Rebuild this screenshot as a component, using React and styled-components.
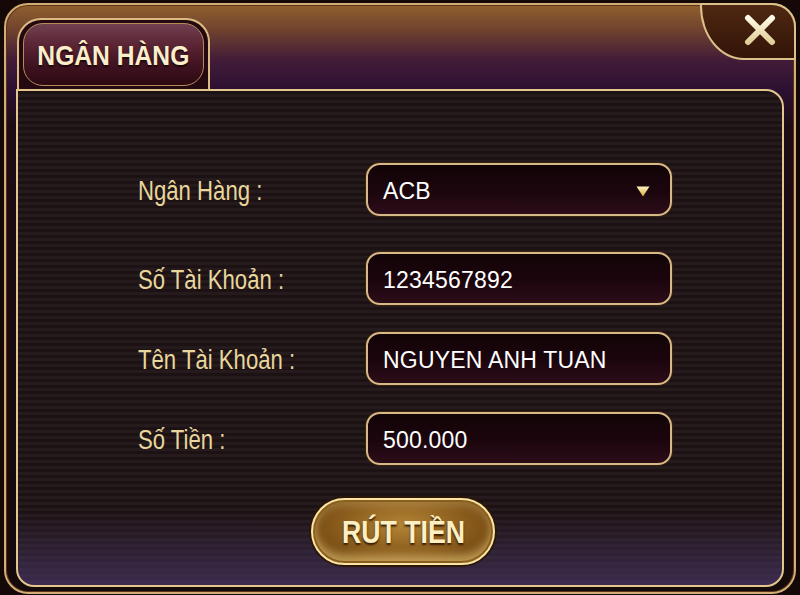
import styled, { createGlobalStyle } from "styled-components";

const GlobalStyle = createGlobalStyle`
  html, body {
    margin: 0;
    padding: 0;
    background: #150908;
  }
  body {
    width: 800px;
    height: 595px;
    overflow: hidden;
    font-family: "Liberation Sans", Arial, sans-serif;
  }
`;

const fields = [
  { label: "Ngân Hàng :", value: "ACB", select: true },
  { label: "Số Tài Khoản :", value: "1234567892" },
  { label: "Tên Tài Khoản :", value: "NGUYEN ANH TUAN" },
  { label: "Số Tiền :", value: "500.000" },
];

const App = () => {
  return (
    <>
      <GlobalStyle />
      <Frame>
        <Header>
          <Tab>
            <TabPill>
              <Condensed $scale={0.88}>NGÂN HÀNG</Condensed>
            </TabPill>
          </Tab>
        </Header>
        <Panel>
          <Form>
            {fields.map((f, i) => (
              <Row key={f.label} $first={i === 0}>
                <Label>
                  <Condensed $scale={0.82} $origin="left">
                    {f.label}
                  </Condensed>
                </Label>
                <Input>
                  <Value>{f.value}</Value>
                  {f.select && (
                    <svg width="14" height="11" viewBox="0 0 14 11">
                      <defs>
                        <linearGradient id="tri" x1="0" y1="0" x2="0" y2="1">
                          <stop offset="0" stopColor="#fff4c0" />
                          <stop offset="1" stopColor="#d9a63a" />
                        </linearGradient>
                      </defs>
                      <path d="M0.5 0.5 H13.5 L7 10.5 Z" fill="url(#tri)" />
                    </svg>
                  )}
                </Input>
              </Row>
            ))}
          </Form>
          <Actions>
            <SubmitButton>
              <Condensed $scale={0.86}>RÚT TIỀN</Condensed>
            </SubmitButton>
          </Actions>
        </Panel>
        <CloseButton aria-label="close">
          <svg width="34" height="34" viewBox="0 0 34 34">
            <defs>
              <linearGradient id="xg" x1="0" y1="0" x2="0" y2="1">
                <stop offset="0" stopColor="#fffbe8" />
                <stop offset="1" stopColor="#e2cf98" />
              </linearGradient>
            </defs>
            <path
              d="M5 5 L29 29 M29 5 L5 29"
              stroke="url(#xg)"
              strokeWidth="6"
              strokeLinecap="round"
            />
          </svg>
        </CloseButton>
      </Frame>
    </>
  );
};

export default App;

// the game UI uses a condensed face; no narrow font is installed, so squeeze a regular one
const Condensed = styled.span`
  display: inline-block;
  white-space: nowrap;
  transform: scaleX(${(p) => p.$scale});
  transform-origin: ${(p) => p.$origin || "center"};
`;

const Frame = styled.div`
  position: relative;
  box-sizing: border-box;
  width: 792px;
  height: 591px;
  margin: 3px 0 0 4px;
  border: 2px solid #d2ae76;
  border-radius: 24px;
  padding: 0 10px 5px 10px;
  display: flex;
  flex-direction: column;
  background: linear-gradient(
    180deg,
    #90602e 0px,
    #74462e 22px,
    #421c38 55px,
    #2c1032 85px,
    #1c0c16 120px,
    #150a0a 100%
  );
  box-shadow: inset 0 0 0 1px #5a3418;
`;

const Header = styled.div`
  height: 84px;
  padding-top: 13px;
  box-sizing: border-box;
  display: flex;
  align-items: flex-end;
`;

const Tab = styled.div`
  box-sizing: border-box;
  width: 193px;
  height: 71px;
  margin-left: 1px;
  padding: 3px 4px 3px 4px;
  border: 2px solid #dcbb82;
  border-bottom: none;
  border-radius: 24px 24px 0 0;
  background: #240a10;
`;

const TabPill = styled.div`
  box-sizing: border-box;
  height: 100%;
  border-radius: 20px;
  border: 1.5px solid #b48c5c;
  background: linear-gradient(
    180deg,
    #704050 0%,
    #5a2434 35%,
    #3e1220 70%,
    #2c0a12 100%
  );
  display: flex;
  align-items: center;
  justify-content: center;
  font-weight: 700;
  font-size: 28px;
  color: #fbeecb;
  text-shadow: 0 2px 2px #1c0508;
  padding-top: 2px;
`;

const Panel = styled.div`
  position: relative;
  flex: 1;
  box-sizing: border-box;
  border: 2px solid #e2c68e;
  border-radius: 0 18px 18px 18px;
  background:
    linear-gradient(180deg, rgba(0, 0, 0, 0) 85%, rgba(70, 52, 96, 0.75) 100%),
    repeating-linear-gradient(
      180deg,
      #1c1214 0px,
      #1c1214 3px,
      #251a1c 3px,
      #251a1c 6px
    );
  padding-top: 72px;
  display: flex;
  flex-direction: column;
`;

const Form = styled.div`
  display: flex;
  flex-direction: column;
  padding-left: 120px;
`;

const Row = styled.div`
  display: grid;
  grid-template-columns: 228px 306px;
  align-items: center;
  margin-bottom: ${(p) => (p.$first ? "36px" : "27px")};
`;

const Label = styled.div`
  font-size: 27px;
  color: #e8d69c;
  padding-top: 4px;
`;

const Input = styled.div`
  box-sizing: border-box;
  height: 53px;
  border: 2px solid #d6b986;
  border-radius: 14px;
  background: linear-gradient(180deg, #110306 0%, #1c060e 55%, #2c0c18 100%);
  box-shadow: 0 0 0 1px #3a2010;
  display: flex;
  align-items: center;
  justify-content: space-between;
  padding: 3px 20px 0 15px;
`;

const Value = styled.span`
  font-size: 23px;
  color: #ffffff;
  letter-spacing: 0.2px;
`;

const Actions = styled.div`
  display: flex;
  justify-content: center;
  padding-left: 6px;
  margin-top: 6px;
`;

const SubmitButton = styled.button`
  box-sizing: border-box;
  width: 184px;
  height: 67px;
  border-radius: 34px;
  border: 2px solid #fae4a6;
  background: radial-gradient(
    ellipse at 50% 40%,
    #b48436 0%,
    #8a5c1c 50%,
    #5e3808 100%
  );
  box-shadow:
    inset 0 0 0 2px #8a5e1c,
    inset 0 -8px 10px rgba(255, 222, 140, 0.55),
    inset 0 6px 8px rgba(255, 230, 170, 0.25),
    0 0 0 2px #2c1606;
  font-family: "Liberation Sans", Arial, sans-serif;
  font-weight: 700;
  font-size: 31px;
  color: #fcefc4;
  text-shadow: 0 2px 2px #3a1e00;
  cursor: pointer;
  padding: 2px 0 0 0;
`;

const CloseButton = styled.button`
  position: absolute;
  top: -2px;
  right: -2px;
  width: 96px;
  height: 57px;
  box-sizing: border-box;
  border: 2px solid #dcc08a;
  border-top-right-radius: 24px;
  border-bottom-left-radius: 44px 54px;
  background: linear-gradient(180deg, #4e2812 0%, #331408 100%);
  display: flex;
  align-items: center;
  justify-content: center;
  padding: 0 0 4px 24px;
  cursor: pointer;
`;
